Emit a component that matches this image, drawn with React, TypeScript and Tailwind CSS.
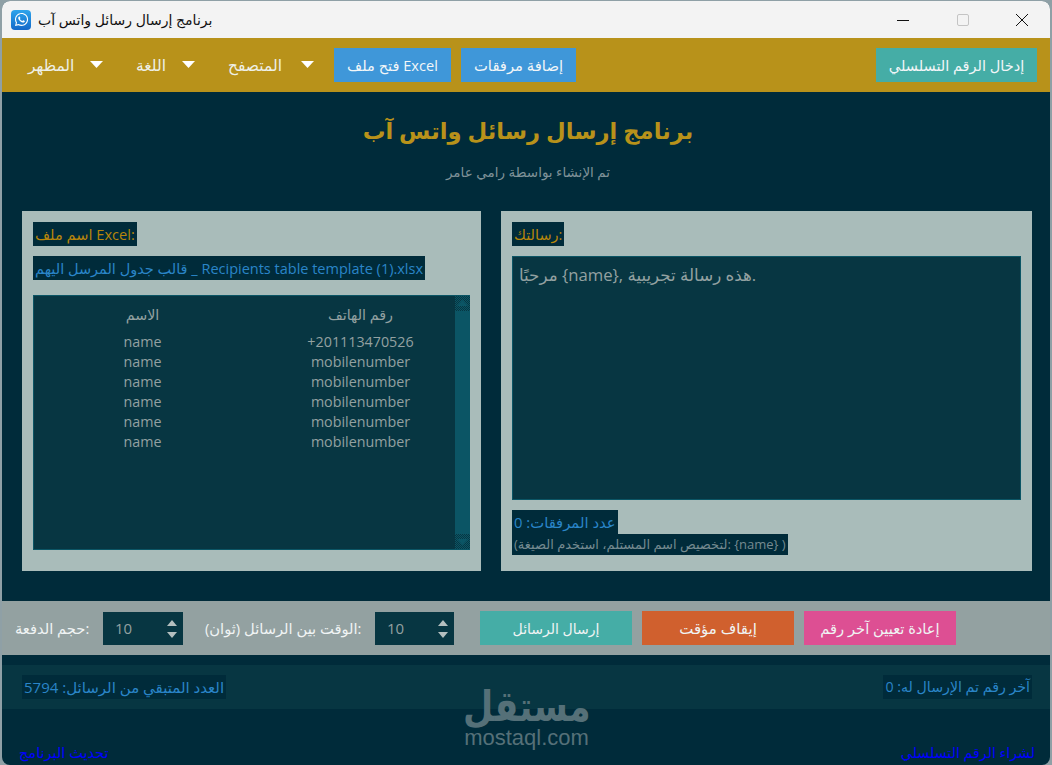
import { FaWhatsapp } from "react-icons/fa";

function Menu({ label, w }: { label: string; w: string }) {
  return (
    <div className={`flex items-center justify-between text-[15.5px] text-[#eef0e8] ${w}`}>
      <span className="pt-[2px]">{label}</span>
      <svg width="13" height="7" viewBox="0 0 13 7" className="mb-[2px]"><path d="M0 0h13L6.5 7z" fill="#ffffff" /></svg>
    </div>
  );
}

function Spin({ w }: { w: string }) {
  return (
    <div className={`relative flex h-[33px] items-center bg-[#073642] pl-[12px] text-[15px] text-[#93a1a1] ${w}`}>
      10
      <svg width="12" height="20" viewBox="0 0 12 20" className="absolute right-[5px] top-[7px]">
        <path d="M6 1l5 6H1z" fill="#b4bfbf" />
        <path d="M6 19l5-6H1z" fill="#b4bfbf" />
      </svg>
    </div>
  );
}

function Dither({ down }: { down?: boolean }) {
  const id = down ? "dd" : "du";
  return (
    <svg width="15" height="15" viewBox="0 0 15 15" className="block">
      <defs>
        <pattern id={id} width="2" height="2" patternUnits="userSpaceOnUse">
          <rect width="2" height="2" fill="#073642" />
          <rect width="1" height="1" fill="#0b5565" />
          <rect x="1" y="1" width="1" height="1" fill="#0b5565" />
        </pattern>
      </defs>
      <rect width="15" height="15" fill={`url(#${id})`} />
      <path d={down ? "M2 5h11l-5.500 6z" : "M2 10h11l-5.500-6z"} fill="#0b5565" />
    </svg>
  );
}

const rows = [
  ["name", "+201113470526"],
  ["name", "mobilenumber"],
  ["name", "mobilenumber"],
  ["name", "mobilenumber"],
  ["name", "mobilenumber"],
  ["name", "mobilenumber"],
];

export default function App() {
  return (
    <div className="h-[765px] w-[1052px] overflow-hidden bg-[#8fa0a6] px-[2px] pt-[1px] font-['Open_Sans','DejaVu_Sans',sans-serif]">
      <div className="relative flex h-[764px] flex-col overflow-hidden rounded-[8px] bg-[#002b3a]">
        {/* title bar */}
        <div className="flex h-[37px] items-center bg-[#f3f3f3] pl-[9px]">
          <div className="flex h-[20px] w-[20px] items-center justify-center rounded-[4px] bg-linear-to-b from-[#2fa5ec] to-[#1468c8]">
            <FaWhatsapp className="text-[15px] text-white" />
          </div>
          <span className="ml-[7px] text-[14px] text-[#111111]">برنامج إرسال رسائل واتس آب</span>
          <div className="ml-auto flex items-center pr-[22px]">
            <svg width="12" height="12" viewBox="0 0 12 12"><path d="M0 6.500h12" stroke="#111" strokeWidth="1" /></svg>
            <svg width="12" height="12" viewBox="0 0 12 12" className="ml-[48px]"><rect x=".5" y=".5" width="11" height="11" rx="1.500" fill="none" stroke="#c4c4c4" /></svg>
            <svg width="12" height="12" viewBox="0 0 12 12" className="ml-[47px]"><path d="M0 0l12 12M12 0L0 12" stroke="#111" strokeWidth="1" /></svg>
          </div>
        </div>

        {/* toolbar */}
        <div className="flex h-[54px] items-center bg-[#b8921a] pl-[26px] pr-[13px]">
          <Menu label="المظهر" w="w-[75px]" />
          <div className="ml-[33px]"><Menu label="اللغة" w="w-[59px]" /></div>
          <div className="ml-[33px]"><Menu label="المتصفح" w="w-[86px]" /></div>
          <button className="ml-[20px] h-[34px] w-[117px] bg-[#3f97d9] pt-[1px] text-[14.6px] text-[#f2f6f8]">فتح ملف Excel</button>
          <button className="ml-[10px] h-[34px] w-[115px] bg-[#3f97d9] pt-[1px] text-[14.8px] text-[#f2f6f8]">إضافة مرفقات</button>
          <button className="ml-auto h-[34px] w-[161px] bg-[#45ada6] pt-[1px] text-[14.5px] text-[#f2f6f8]">إدخال الرقم التسلسلي</button>
        </div>

        {/* heading */}
        <div className="flex h-[119px] flex-col items-center pl-[4px]">
          <h1 className="mt-[22px] text-[22.7px] font-bold leading-[34px] text-[#b8921a]">برنامج إرسال رسائل واتس آب</h1>
          <p className="mt-[14px] text-[13.5px] leading-[20px] text-[#7f9298]">تم الإنشاء بواسطة رامي عامر</p>
        </div>

        {/* panels */}
        <div className="flex gap-[20px] pl-[20px] pr-[18px]">
          <section className="h-[360px] w-[459px] bg-[#a9bcba] px-[11px] pt-[11px]">
            <div className="flex h-[24px] w-fit items-center bg-[#002b3a] px-[2px] pt-[1px] text-[14.6px] text-[#b8860b]">اسم ملف Excel:</div>
            <div className="mt-[10px] flex h-[24px] w-fit items-center bg-[#002b3a] px-[2px] pt-[1px] text-[14.5px] text-[#2a85c8]">قالب جدول المرسل اليهم _ Recipients table template (1).xlsx</div>
            <div className="mt-[15px] flex h-[255px] border-y border-l border-[#0b5565] bg-[#073642] text-[14.3px] text-[#93a1a1]">
              <div className="min-w-0 flex-1 overflow-hidden">
                <div className="grid w-[436px] grid-cols-[217px_219px] pt-[9px] text-center leading-[20px]">
                  <span className="mb-[7px]">الاسم</span>
                  <span className="mb-[7px]">رقم الهاتف</span>
                  {rows.map(([n, p], i) => [<span key={`n${i}`}>{n}</span>, <span key={`p${i}`}>{p}</span>])}
                </div>
              </div>
              <div className="flex w-[15px] flex-col justify-between bg-[#0b5565]">
                <Dither />
                <Dither down />
              </div>
            </div>
          </section>

          <section className="h-[360px] w-[531px] bg-[#a9bcba] px-[11px] pt-[11px]">
            <div className="flex h-[24px] w-fit items-center bg-[#002b3a] px-[2px] pt-[1px] text-[14.5px] text-[#b8860b]">رسالتك:</div>
            <div className="mt-[10px] h-[244px] border border-[#0b5565] bg-[#073642] px-[6px] py-[8px] text-[16.7px] leading-[20px] text-[#93a1a1]">مرحبًا {"{name}"}, هذه رسالة تجريبية.</div>
            <div className="mt-[10px] flex h-[24px] w-fit items-center bg-[#002b3a] px-[2px] text-[14.8px] text-[#2a85c8]">عدد المرفقات: 0</div>
            <div className="flex h-[21px] w-fit items-center bg-[#002b3a] px-[2px] text-[13px] text-[#758a90]">(لتخصيص اسم المستلم، استخدم الصيغة: {"{name}"} )</div>
          </section>
        </div>

        {/* controls */}
        <div className="mt-[30px] flex h-[54px] items-center bg-[#93a1a1] pl-[13px] text-[14.7px] text-[#f0f4f4]">
          <span className="w-[75px]">حجم الدفعة:</span>
          <div className="ml-[13px]"><Spin w="w-[80px]" /></div>
          <span className="ml-[22px] w-[157px]">الوقت بين الرسائل (ثوان):</span>
          <div className="ml-[13px]"><Spin w="w-[79px]" /></div>
          <button className="ml-[26px] h-[34px] w-[152px] bg-[#45ada6] text-[14px]">إرسال الرسائل</button>
          <button className="ml-[10px] h-[34px] w-[152px] bg-[#d0602e] text-[15px]">إيقاف مؤقت</button>
          <button className="ml-[10px] h-[34px] w-[152px] bg-[#dd4f93]">إعادة تعيين آخر رقم</button>
        </div>

        {/* status */}
        <div className="mt-[10px] flex h-[44px] items-center justify-between bg-[#073642] pl-[20px] pr-[18px] text-[#2a85c8]">
          <div className="flex h-[24px] items-center bg-[#002b3a] px-[2px] text-[15px]">العدد المتبقي من الرسائل: 5794</div>
          <div className="flex h-[24px] items-center bg-[#002b3a] px-[2px] text-[14.2px]">آخر رقم تم الإرسال له: 0</div>
        </div>

        {/* links */}
        <div className="flex flex-1 items-end justify-between pb-[2px] pl-[17px] pr-[15px] leading-[20px] text-[#0000ff]">
          <span className="text-[14.5px]">تحديث البرنامج</span>
          <span className="text-[14.2px]">لشراء الرقم التسلسلي</span>
        </div>

        {/* watermark */}
        <div className="pointer-events-none absolute left-[461px] top-[686px] flex w-[127px] flex-col items-center text-[#557078]">
          <span className="h-[40px] scale-x-[0.83] whitespace-nowrap font-['DejaVu_Sans',sans-serif] text-[42px] font-bold leading-[40px]">مستقل</span>
          <span className="font-['Liberation_Sans',sans-serif] text-[22px] leading-[22px]">mostaql.com</span>
        </div>
      </div>
    </div>
  );
}
